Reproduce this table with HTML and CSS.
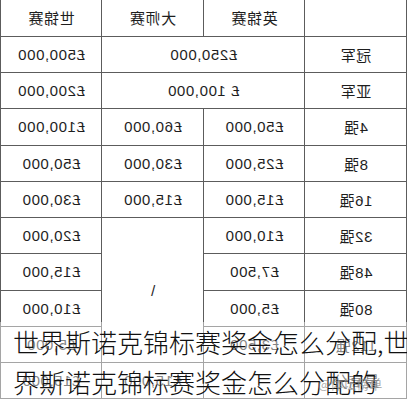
FILE: index.html
```html
<!DOCTYPE html>
<html lang="zh">
<head>
<meta charset="utf-8">
<link rel="stylesheet" href="styles.css">
</head>
<body>
<div class="page">
  <table class="prize">
    <colgroup><col><col><col><col></colgroup>
    <tr><td></td><td>英锦赛</td><td>大师赛</td><td>世锦赛</td></tr>
    <tr><td>冠军</td><td colspan="2">£250,000</td><td>£500,000</td></tr>
    <tr><td>亚军</td><td colspan="2">£ 100,000</td><td>£200,000</td></tr>
    <tr><td>4强</td><td>£50,000</td><td>£60,000</td><td>£100,000</td></tr>
    <tr><td>8强</td><td>£25,000</td><td>£30,000</td><td>£50,000</td></tr>
    <tr><td>16强</td><td>£15,000</td><td>£15,000</td><td>£30,000</td></tr>
    <tr><td>32强</td><td>£10,000</td><td rowspan="4" class="slash">\</td><td>£20,000</td></tr>
    <tr><td>48强</td><td>£7,500</td><td>£15,000</td></tr>
    <tr><td>80强</td><td>£5,000</td><td>£10,000</td></tr>
    <tr><td>112强</td><td>£3,500</td><td>£5,000</td></tr>
    <tr><td>最高分</td><td></td><td>£15,000</td><td>£15,000</td></tr>
  </table>
  <div class="caption">
    <span class="line">世界斯诺克锦标赛奖金怎么分配,世</span>
    <span class="line">界斯诺克锦标赛奖金怎么分配的</span>
  </div>
  <div class="mark">@体坛榜单</div>
</div>
</body>
</html>
```

FILE: styles.css
```css
html, body {
  margin: 0;
  padding: 0;
  background: #fff;
}

.page {
  position: relative;
  width: 407px;
  height: 400px;
  overflow: hidden;
}

.prize {
  width: 407px;
  height: 399px;
  table-layout: fixed;
  border-collapse: collapse;
  transform: scaleX(-1);
  font-family: "Liberation Sans", "Noto Sans CJK SC", sans-serif;
  font-size: 15px;
  letter-spacing: 0.6px;
  color: #1e1e1e;
}

.prize tr {
  height: 36.27px;
}

.prize tr:first-child td {
  border-top: none;
}

.prize td {
  border: 1px solid #5c5c5c;
  text-align: center;
  vertical-align: middle;
  padding: 0;
}

.prize .slash {
  font-size: 15px;
}

.caption {
  position: absolute;
  left: 0;
  right: 0;
  top: 322px;
  bottom: 0;
  padding-left: 13px;
  background: rgba(255, 255, 255, 0.45);
  font-family: "Noto Sans CJK SC", sans-serif;
  font-weight: 300;
  font-size: 26px;
  line-height: 40px;
  color: #111;
  white-space: nowrap;
}

.caption .line {
  display: block;
}

.mark {
  position: absolute;
  left: 318px;
  top: 374px;
  font-family: "Noto Sans CJK SC", sans-serif;
  font-size: 13px;
  color: rgba(140, 140, 140, 0.7);
}
```
